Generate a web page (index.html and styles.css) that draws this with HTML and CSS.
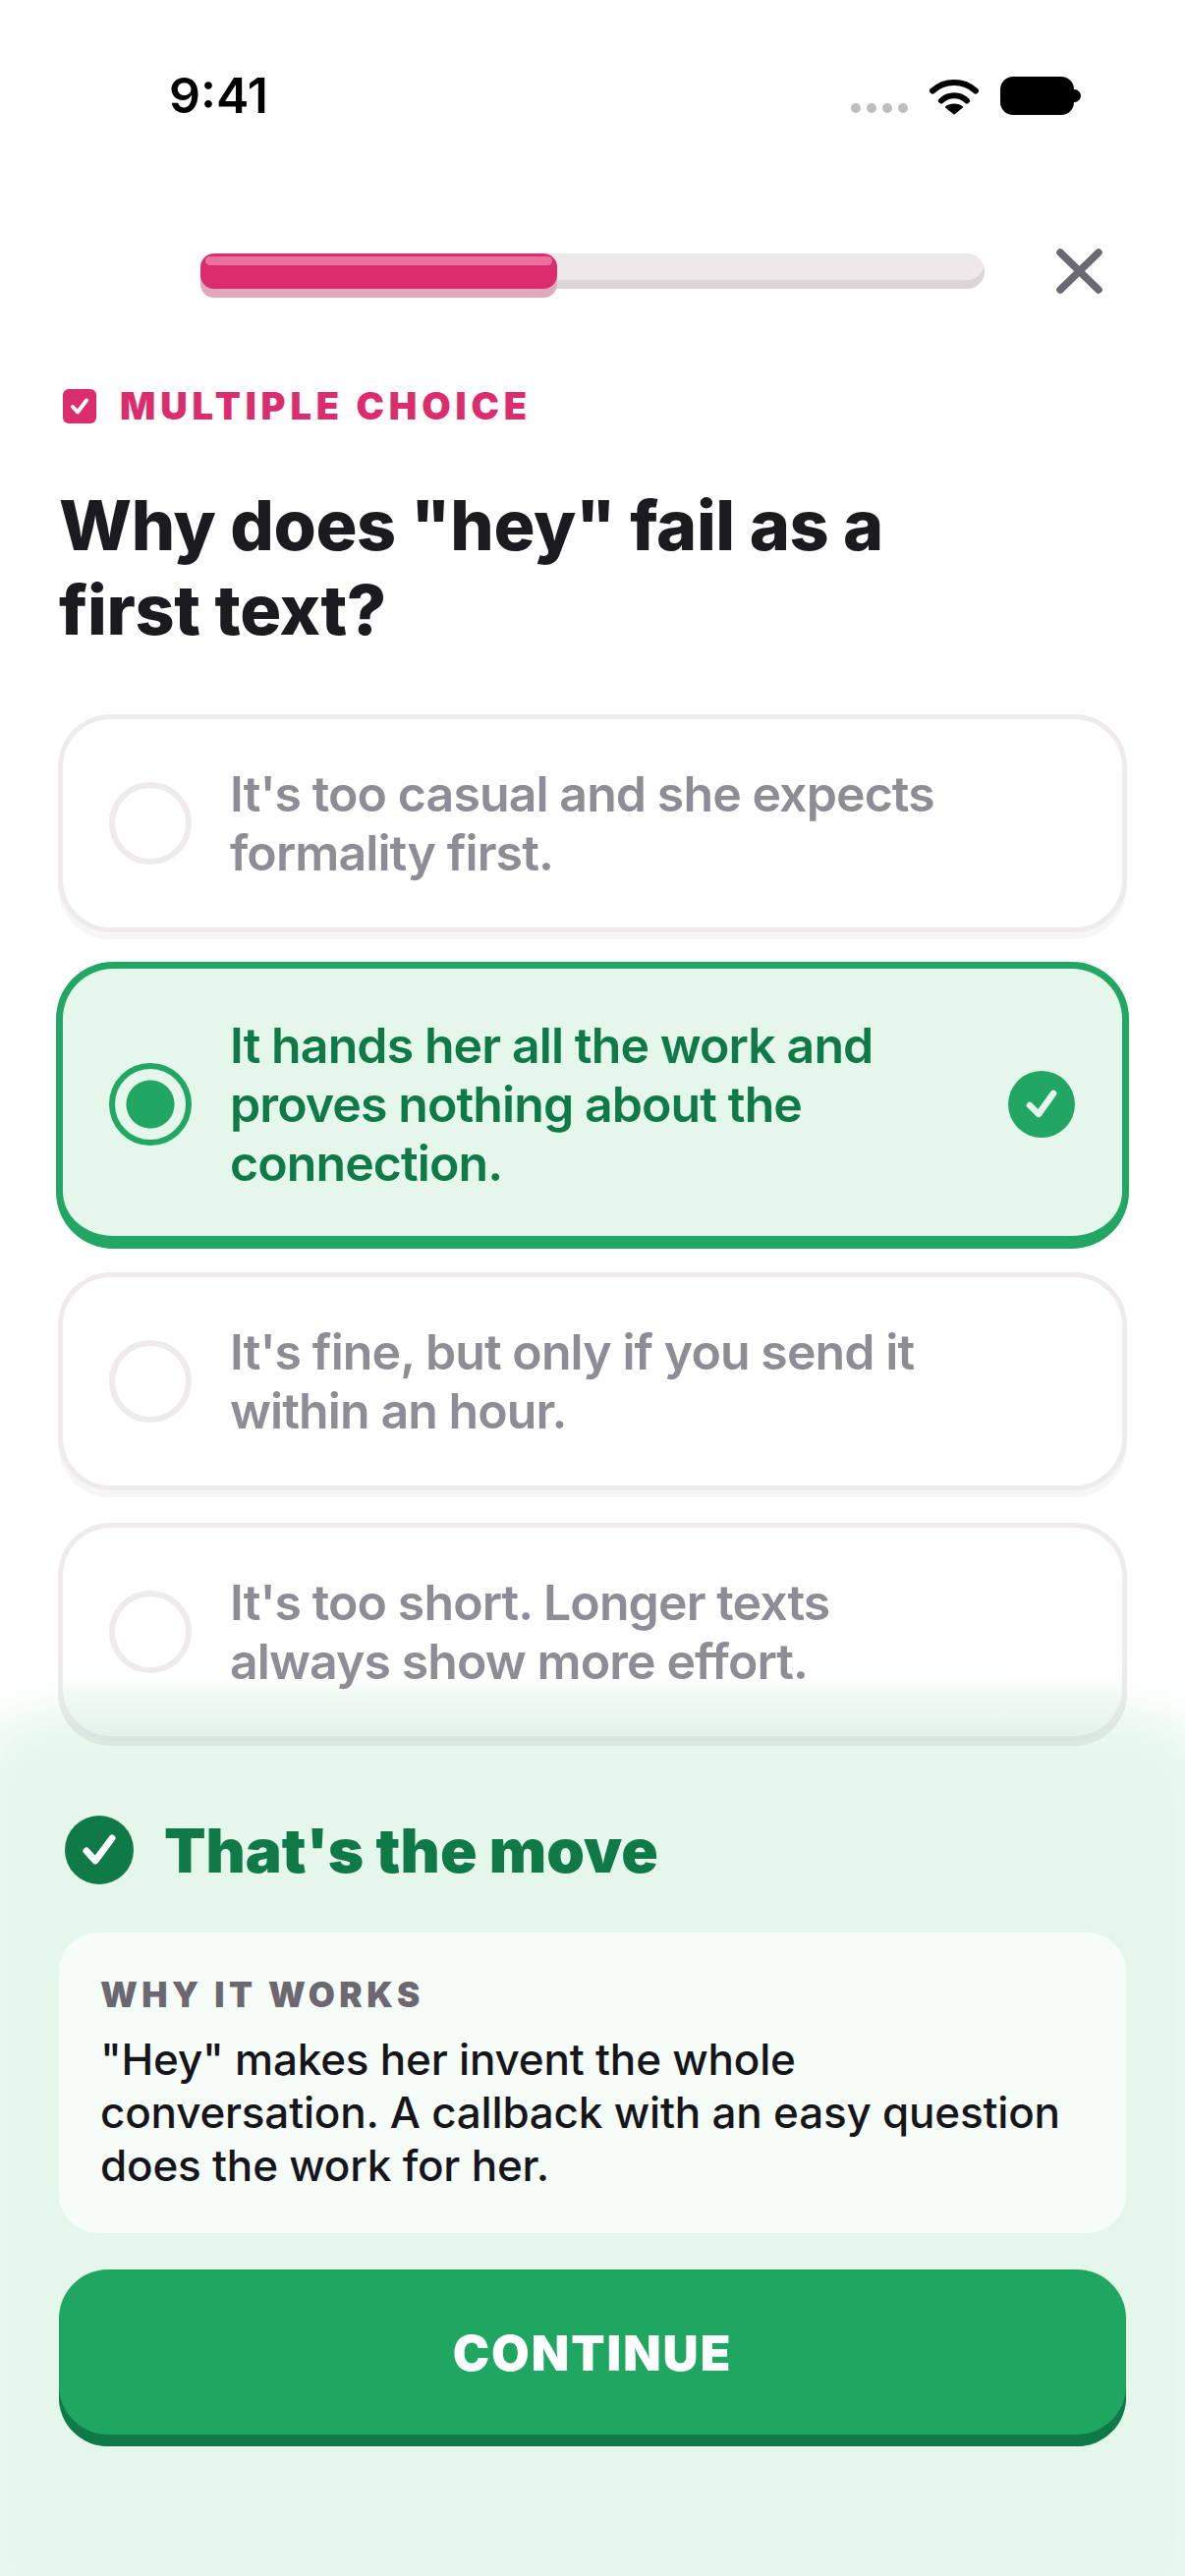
FILE: index.html
```html
<!DOCTYPE html>
<html lang="en">

<head>
    <meta charset="UTF-8">
    <meta name="viewport" content="width=device-width, initial-scale=1.0">
    <title>Multiple choice</title>
    <link rel="stylesheet" href="styles.css">
</head>

<body>
    <div class="screen">
        <div class="status">
            <span class="time">9:41</span>
            <div class="status-icons">
                <div class="dots"><i></i><i></i><i></i><i></i></div>
                <svg class="wifi" viewBox="0 0 50 37">
                    <path d="M3 12.5 C15 1 35 1 47 12.5" fill="none" stroke="#000" stroke-width="6" stroke-linecap="round" />
                    <path d="M12 22.5 C19 15.5 31 15.5 38 22.5" fill="none" stroke="#000" stroke-width="6" stroke-linecap="round" />
                    <path d="M25 35.5 L17 29 C21 25.5 29 25.5 33 29 Z" fill="#000" stroke="#000" stroke-width="2" stroke-linejoin="round" />
                </svg>
                <div class="battery"></div>
            </div>
        </div>

        <div class="top-row">
            <div class="track">
                <div class="fill"></div>
            </div>
            <svg class="close" viewBox="0 0 47 46">
                <path d="M4 4 L43 42 M43 4 L4 42" fill="none" stroke="#6b6871" stroke-width="7.5" stroke-linecap="round" />
            </svg>
        </div>

        <div class="kind">
            <svg class="kind-icon" viewBox="0 0 34 35">
                <rect width="34" height="35" rx="6" fill="#db2d6d" />
                <path d="M10 18 L15 23.5 L24 11.5" fill="none" stroke="#fff" stroke-width="4" stroke-linecap="round" stroke-linejoin="round" />
            </svg>
            <span>MULTIPLE CHOICE</span>
        </div>

        <h1>Why does "hey" fail as a<br>first text?</h1>

        <div class="options">
            <div class="option">
                <div class="radio"></div>
                <p>It's too casual and she expects<br>formality first.</p>
            </div>
            <div class="option selected">
                <div class="radio"></div>
                <p>It hands her all the work and<br>proves nothing about the<br>connection.</p>
                <svg class="tick" viewBox="0 0 68 68">
                    <circle cx="34" cy="34" r="34" fill="#22a663" />
                    <path d="M22 35 L31 44 L46 23" fill="none" stroke="#e5f7eb" stroke-width="6.5" stroke-linecap="round" stroke-linejoin="round" />
                </svg>
            </div>
            <div class="option">
                <div class="radio"></div>
                <p>It's fine, but only if you send it<br>within an hour.</p>
            </div>
            <div class="option faded">
                <div class="radio"></div>
                <p>It's too short. Longer texts<br>always show more effort.</p>
            </div>
        </div>

        <div class="sheet">
            <div class="verdict">
                <svg class="verdict-icon" viewBox="0 0 70 70">
                    <circle cx="35" cy="35" r="35" fill="#0f7a48" />
                    <path d="M22 36 L31 46 L48 23" fill="none" stroke="#fff" stroke-width="7" stroke-linecap="round" stroke-linejoin="round" />
                </svg>
                <span>That's the move</span>
            </div>
            <div class="why">
                <h2>WHY IT WORKS</h2>
                <p>"Hey" makes her invent the whole<br>conversation. A callback with an easy question<br>does the work for her.</p>
            </div>
            <button class="continue">CONTINUE</button>
        </div>
    </div>
</body>

</html>
```

FILE: styles.css
```css
* {
    box-sizing: border-box;
}

body {
    margin: 0;
    background: #fff;
    font-family: Inter, "Noto Sans", sans-serif;
}

.screen {
    position: relative;
    width: 1206px;
    height: 2622px;
    overflow: hidden;
    background: #fff;
}

/* status bar */
.status {
    display: flex;
    justify-content: space-between;
    align-items: center;
    height: 194px;
    padding: 0 113px 0 172px;
}

.time {
    font-size: 50px;
    font-weight: 600;
    color: #000;
}

.status-icons {
    display: flex;
    align-items: flex-end;
    gap: 22px;
}

.dots {
    display: flex;
    gap: 6px;
    margin-bottom: 2px;
}

.dots i {
    width: 10px;
    height: 10px;
    border-radius: 50%;
    background: #bdbdbd;
}

.wifi {
    width: 50px;
    height: 37px;
}

.battery {
    position: relative;
    width: 75px;
    height: 39px;
    border-radius: 13px;
    background: #000;
}

.battery::after {
    content: "";
    position: absolute;
    right: -7px;
    top: 13px;
    width: 7px;
    height: 13px;
    border-radius: 0 7px 7px 0;
    background: #000;
}

/* progress */
.top-row {
    display: flex;
    align-items: center;
    gap: 73px;
    height: 46px;
    margin-top: 59px;
    padding-left: 204px;
}

.track {
    width: 798px;
    height: 36px;
    border-radius: 18px;
    background: #ede9eb;
    box-shadow: inset 0 -9px 0 #dad6d8;
}

.fill {
    position: relative;
    width: 363px;
    height: 36px;
    border-radius: 14px;
    background: #db2d6d;
    box-shadow: 0 9px 0 #dfa9bc;
}

.fill::before {
    content: "";
    position: absolute;
    left: 5px;
    right: 5px;
    top: 3px;
    height: 9px;
    border-radius: 5px;
    background: #ec709c;
}

.close {
    width: 47px;
    height: 46px;
}

/* question */
.kind {
    display: flex;
    align-items: center;
    gap: 24px;
    margin: 92px 0 0 64px;
    font-size: 38px;
    line-height: 44px;
    font-weight: 900;
    letter-spacing: 4.9px;
    color: #db2d6d;
}

.kind-icon {
    width: 34px;
    height: 35px;
}

h1 {
    margin: 57px 0 0 60px;
    font-size: 70px;
    line-height: 86px;
    font-weight: 800;
    letter-spacing: -0.4px;
    color: #1a1a1f;
}

.options {
    position: relative;
    z-index: 1;
    display: flex;
    flex-direction: column;
    gap: 33px;
    margin: 63px 59px 0;
}

.option {
    display: flex;
    align-items: center;
    gap: 39px;
    padding: 46px 47px;
    border: 5px solid #efebed;
    border-radius: 54px;
    background: #fff;
    box-shadow: 0 7px 0 #f7f6f7;
}

.option p {
    flex: 1;
    margin: 0;
    font-size: 50px;
    line-height: 60px;
    font-weight: 600;
    letter-spacing: -0.9px;
    color: #8e8c94;
}

.radio {
    width: 84px;
    height: 84px;
    flex-shrink: 0;
    border: 6px solid #efebed;
    border-radius: 50%;
}

.option.selected {
    margin: -3px -2px -9px;
    padding: 48px 48px 44px 47px;
    border: 7px solid #22a663;
    border-bottom-width: 13px;
    border-radius: 58px;
    background: #e5f7eb;
    box-shadow: none;
}

.selected p {
    color: #0f7a48;
}

.selected .radio {
    border-color: #22a663;
    background: radial-gradient(circle, #22a663 24px, transparent 25px);
}

.tick {
    width: 68px;
    height: 68px;
    flex-shrink: 0;
}

/* last option runs into the sheet fade */
.option.faded {
    border-color: transparent;
    background:
        linear-gradient(#fff 150px, #f3fbf6 165px, #e9f5ef 195px, #e5f2ec 100%) padding-box,
        linear-gradient(#efebed 140px, #e4e9e6 195px, #d5e5de 100%) border-box;
    box-shadow: 0 5px 0 #dbe9e2;
}

/* result sheet */
.sheet {
    position: absolute;
    left: 0;
    right: 0;
    bottom: 0;
    z-index: 0;
    height: 942px;
    padding: 168px 60px 0;
}

.sheet::before {
    content: "";
    position: absolute;
    z-index: -1;
    left: -30px;
    right: -30px;
    top: 64px;
    bottom: -60px;
    border-radius: 80px;
    background: #e5f7eb;
    filter: blur(24px);
}

.verdict {
    display: flex;
    align-items: center;
    gap: 31px;
    height: 70px;
    padding-left: 6px;
    font-size: 62px;
    font-weight: 900;
    color: #0f7a48;
}

.verdict-icon {
    width: 70px;
    height: 70px;
}

.why {
    margin-top: 49px;
    height: 306px;
    padding: 43px 42px;
    border-radius: 40px;
    background: #f6fcf8;
}

h2 {
    margin: 0;
    font-size: 35px;
    line-height: 40px;
    font-weight: 900;
    letter-spacing: 4.5px;
    color: #6b6871;
}

.why p {
    margin: 19px 0 0;
    font-size: 44px;
    line-height: 54px;
    font-weight: 500;
    letter-spacing: -0.2px;
    color: #15151a;
}

.continue {
    display: block;
    width: 100%;
    height: 180px;
    margin-top: 37px;
    padding: 0 0 10px;
    border: 0;
    border-radius: 50px;
    background: #1fa661;
    box-shadow: inset 0 -12px 0 #0f7a48;
    font-family: inherit;
    font-size: 50px;
    font-weight: 900;
    letter-spacing: 2px;
    color: #fff;
}
```
